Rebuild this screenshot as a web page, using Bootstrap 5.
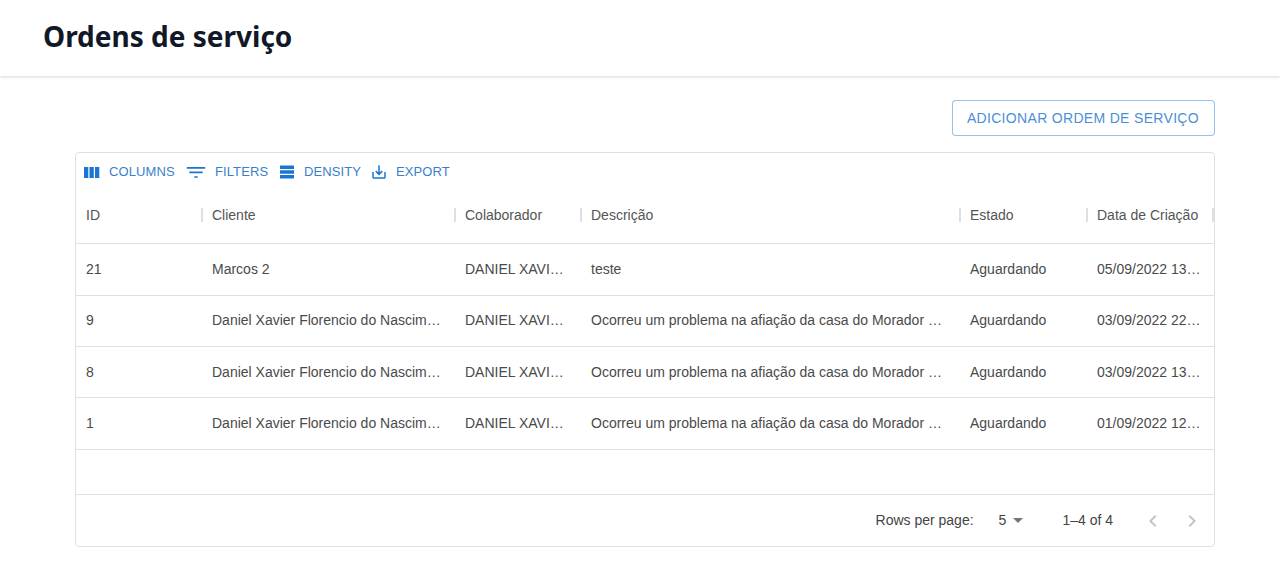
<!DOCTYPE html>
<html lang="pt">
<head>
<meta charset="utf-8">
<title>Ordens de serviço</title>
<link href="https://cdn.jsdelivr.net/npm/bootstrap@5.3.0/dist/css/bootstrap.min.css" rel="stylesheet">
<style>
html,body{height:587px;overflow:hidden;background:#fff}
body{font-family:"Liberation Sans",Arial,sans-serif;font-size:14px;color:rgba(0,0,0,.87)}
.topbar{height:76px;padding:0 43px 4px;background:#fff;box-shadow:0 1px 3px rgba(0,0,0,.16)}
.page-title{font-family:"Noto Sans",sans-serif;font-weight:700;font-size:28px;line-height:1;margin:0;color:#111827}
.content-area{padding:24px 65px 0 75px}
.add-btn{height:36px;padding:0 15px 0 14px;border:1px solid rgba(25,118,210,.45);border-radius:4px;background:#fff;color:#4a8fd6;font-size:14px;letter-spacing:.32px}
.grid-box{margin-top:16px;height:395px;border:1px solid #e0e0e0;border-radius:4px;display:flex;flex-direction:column}
.tool-row{height:38px;padding:0 0 0 8px;color:#3a7fcb;font-size:13px}
.tool-item{display:flex;align-items:center;letter-spacing:.1px}
.tool-item svg{width:16px;height:16px;fill:#1976d2;flex:none}
.tool-item span{margin-left:9px}
.tool-cols{width:102px}
.tool-filt{width:93px}
.tool-dens{width:91px}
.tool-filt svg{width:20px;height:20px}
.tool-exp svg{width:18px;height:18px}
.tool-exp span{margin-left:8px}
.col-row{display:grid;grid-template-columns:126px 253px 126px 379px 127px 127px;flex:none}
.col-row>div{padding:0 10px;white-space:nowrap;display:flex;align-items:center;min-width:0}
.head-row{height:53.4px;padding-bottom:3px;border-bottom:1px solid #e0e0e0;color:#555}
.head-row>div{position:relative}
.head-row>div+div::before,.head-row>div:last-child::after{content:"";position:absolute;top:17px;width:2px;height:14px;background:#e0e0e0}
.head-row>div+div::before{left:-1px}
.head-row>div:last-child::after{right:0}
.body-row{height:51.33px;border-bottom:1px solid #e0e0e0;color:#4a4a4a}
.filler{flex:1}
.foot-row{height:52px;border-top:1px solid #e0e0e0;padding-right:10px;color:#444;font-size:14px}
.per-page{margin-left:25px;gap:7px}
.caret-mark{width:0;height:0;border-left:5px solid transparent;border-right:5px solid transparent;border-top:5px solid #757575}
.range{margin-left:39px}
.pager{margin-left:28px;gap:15px}
.pager svg{width:24px;height:24px;fill:#c4c4c4}
</style>
</head>
<body>
<header class="topbar d-flex align-items-center">
<h1 class="page-title">Ordens de serviço</h1>
</header>
<main class="content-area">
<div class="d-flex justify-content-end">
<button type="button" class="add-btn">ADICIONAR ORDEM DE SERVIÇO</button>
</div>
<section class="grid-box">
<div class="tool-row d-flex align-items-center">
<div class="tool-item tool-cols"><svg viewBox="0 0 16 16"><path d="M0 3h4.3v11H0zM5.5 3h4.3v11H5.5zM11 3h4.3v11H11z"/></svg><span>COLUMNS</span></div>
<div class="tool-item tool-filt"><svg viewBox="0 0 24 24"><path d="M10 19h4v-2h-4v2zM1 6v2h22V6H1zm3 7.5h16v-2H4v2z"/></svg><span>FILTERS</span></div>
<div class="tool-item tool-dens"><svg viewBox="0 0 16 16"><path d="M1 1.5h14v3.6H1zM1 6.2h14v3.6H1zM1 10.9h14v3.6H1z"/></svg><span>DENSITY</span></div>
<div class="tool-item tool-exp"><svg viewBox="0 0 24 24"><path d="M19 12v7H5v-7H3v7c0 1.1.9 2 2 2h14c1.1 0 2-.9 2-2v-7h-2zm-6 .67 2.59-2.58L17 11.5l-5 5-5-5 1.41-1.41L11 12.67V3h2z"/></svg><span>EXPORT</span></div>
</div>
<div class="col-row head-row">
<div>ID</div><div>Cliente</div><div>Colaborador</div><div>Descrição</div><div>Estado</div><div>Data de Criação</div>
</div>
<div class="col-row body-row">
<div>21</div><div>Marcos 2</div><div>DANIEL XAVI…</div><div>teste</div><div>Aguardando</div><div>05/09/2022 13…</div>
</div>
<div class="col-row body-row">
<div>9</div><div>Daniel Xavier Florencio do Nascim…</div><div>DANIEL XAVI…</div><div>Ocorreu um problema na afiação da casa do Morador …</div><div>Aguardando</div><div>03/09/2022 22…</div>
</div>
<div class="col-row body-row">
<div>8</div><div>Daniel Xavier Florencio do Nascim…</div><div>DANIEL XAVI…</div><div>Ocorreu um problema na afiação da casa do Morador …</div><div>Aguardando</div><div>03/09/2022 13…</div>
</div>
<div class="col-row body-row">
<div>1</div><div>Daniel Xavier Florencio do Nascim…</div><div>DANIEL XAVI…</div><div>Ocorreu um problema na afiação da casa do Morador …</div><div>Aguardando</div><div>01/09/2022 12…</div>
</div>
<div class="filler"></div>
<div class="foot-row d-flex align-items-center justify-content-end">
<span>Rows per page:</span>
<div class="per-page d-flex align-items-center"><span>5</span><span class="caret-mark"></span></div>
<span class="range">1–4 of 4</span>
<div class="pager d-flex align-items-center">
<svg viewBox="0 0 24 24"><path d="M15.41 7.41 14 6l-6 6 6 6 1.41-1.41L10.83 12z"/></svg>
<svg viewBox="0 0 24 24"><path d="M10 6 8.59 7.41 13.17 12l-4.58 4.59L10 18l6-6z"/></svg>
</div>
</div>
</section>
</main>
</body>
</html>
